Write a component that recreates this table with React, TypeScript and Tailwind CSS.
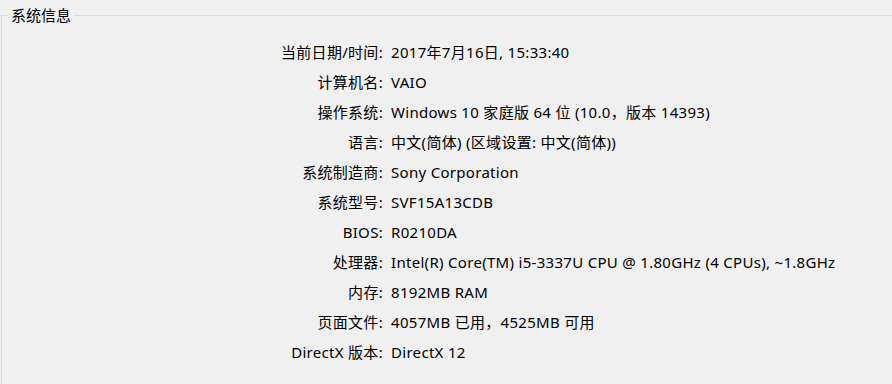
const ROWS: [string, string][] = [
  ["当前日期/时间:", "2017年7月16日, 15:33:40"],
  ["计算机名:", "VAIO"],
  ["操作系统:", "Windows 10 家庭版 64 位 (10.0，版本 14393)"],
  ["语言:", "中文(简体) (区域设置: 中文(简体))"],
  ["系统制造商:", "Sony Corporation"],
  ["系统型号:", "SVF15A13CDB"],
  ["BIOS:", "R0210DA"],
  ["处理器:", "Intel(R) Core(TM) i5-3337U CPU @ 1.80GHz (4 CPUs), ~1.8GHz"],
  ["内存:", "8192MB RAM"],
  ["页面文件:", "4057MB 已用，4525MB 可用"],
  ["DirectX 版本:", "DirectX 12"],
];

export default function App() {
  return (
    <div
      className="h-[384px] w-[892px] overflow-hidden bg-[#f0f0f0] pl-px pt-[5px] text-[15px] tracking-[0.3px] text-black"
      style={{ fontFamily: '"Noto Sans", "Noto Sans CJK SC", sans-serif' }}
    >
      <fieldset className="h-[400px] border-l border-t border-[#dcdcdc]">
        <legend className="ml-[6px] px-[3px] leading-[20px] tracking-normal">系统信息</legend>
        <div className="flex flex-col pt-[12px]">
          {ROWS.map(([label, value]) => (
            <div key={label} className="flex h-[30px] items-center">
              <span className="w-[381px] shrink-0 text-right">{label}</span>
              <span className="pl-[8px] whitespace-nowrap">{value}</span>
            </div>
          ))}
        </div>
      </fieldset>
    </div>
  );
}
